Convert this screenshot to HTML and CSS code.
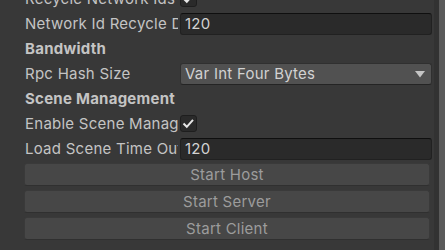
FILE: index.html
```html
<!DOCTYPE html>
<html>
<head>
<meta charset="utf-8">
<link rel="stylesheet" href="styles.css">
</head>
<body>
<div class="inspector">
  <div class="content">
    <div class="row">
      <div class="label">Recycle Network Ids</div>
      <div class="checkbox"><svg viewBox="0 0 17 17" width="17" height="17"><path d="M3.5 8.5 L6.8 11.8 L13 4.8" fill="none" stroke="#e6e6e6" stroke-width="2"/></svg></div>
    </div>
    <div class="row">
      <div class="label">Network Id Recycle Delay</div>
      <div class="field">120</div>
    </div>
    <div class="row">
      <div class="header">Bandwidth</div>
    </div>
    <div class="row">
      <div class="label">Rpc Hash Size</div>
      <div class="dropdown"><span>Var Int Four Bytes</span><svg class="arrow" viewBox="0 0 10 7" width="10" height="7"><path d="M0 0 H10 L5 6.5 Z" fill="#c4c4c4"/></svg></div>
    </div>
    <div class="row">
      <div class="header">Scene Management</div>
    </div>
    <div class="row">
      <div class="label">Enable Scene Management</div>
      <div class="checkbox"><svg viewBox="0 0 17 17" width="17" height="17"><path d="M3.5 8.5 L6.8 11.8 L13 4.8" fill="none" stroke="#e6e6e6" stroke-width="2"/></svg></div>
    </div>
    <div class="row">
      <div class="label">Load Scene Time Out</div>
      <div class="field">120</div>
    </div>
    <div class="buttons">
      <div class="button">Start Host</div>
      <div class="button">Start Server</div>
      <div class="button">Start Client</div>
    </div>
  </div>
  <div class="scrollbar"><div class="thumb"></div></div>
</div>
</body>
</html>
```
FILE: styles.css
```css
html, body {
  margin: 0;
  padding: 0;
  background: #383838;
  overflow: hidden;
}
body {
  width: 445px;
  height: 250px;
  font-family: Inter, "Noto Sans", sans-serif;
  font-size: 15px;
  letter-spacing: 0.25px;
  color: #c4c4c4;
}
.inspector {
  display: flex;
  height: 250px;
}
.content {
  width: 434px;
  margin-top: -14px;
}
.row {
  display: flex;
  align-items: center;
  height: 25px;
  padding-left: 25px;
}
.label {
  width: 153px;
  margin-right: 2px;
  white-space: nowrap;
  overflow: hidden;
  line-height: 25px;
}
.header {
  font-weight: 700;
  line-height: 25px;
}
.field {
  box-sizing: border-box;
  width: 252px;
  height: 22px;
  background: #2a2a2a;
  border: 1px solid #212121;
  border-top-color: #0f0f0f;
  border-radius: 3px;
  padding-left: 4px;
  line-height: 20px;
  color: #d2d2d2;
}
.dropdown {
  box-sizing: border-box;
  width: 252px;
  height: 22px;
  background: #515151;
  border: 1px solid #303030;
  border-bottom-color: #242424;
  border-radius: 3px;
  padding-left: 4px;
  padding-right: 6px;
  display: flex;
  align-items: center;
  justify-content: space-between;
  color: #d2d2d2;
}
.arrow {
  display: block;
  margin-top: 1px;
}
.checkbox {
  box-sizing: border-box;
  width: 17px;
  height: 17px;
  background: #2a2a2a;
  border: 1px solid #1e1e1e;
  border-radius: 3px;
  display: flex;
  align-items: center;
  justify-content: center;
}
.checkbox svg {
  display: block;
  flex: none;
}
.buttons {
  display: flex;
  flex-direction: column;
  gap: 4px;
  margin-top: 2px;
  padding-left: 24px;
  width: 406px;
}
.button {
  box-sizing: border-box;
  height: 23px;
  background: #474747;
  border: 1px solid #3a3a3a;
  border-bottom-color: #303030;
  border-radius: 3px;
  text-align: center;
  line-height: 21px;
  color: #9c9c9c;
}
.scrollbar {
  width: 11px;
  height: 250px;
  background: #323232;
  display: flex;
  justify-content: flex-end;
}
.thumb {
  width: 6px;
  height: 250px;
  background: #5a5a5a;
}
```
